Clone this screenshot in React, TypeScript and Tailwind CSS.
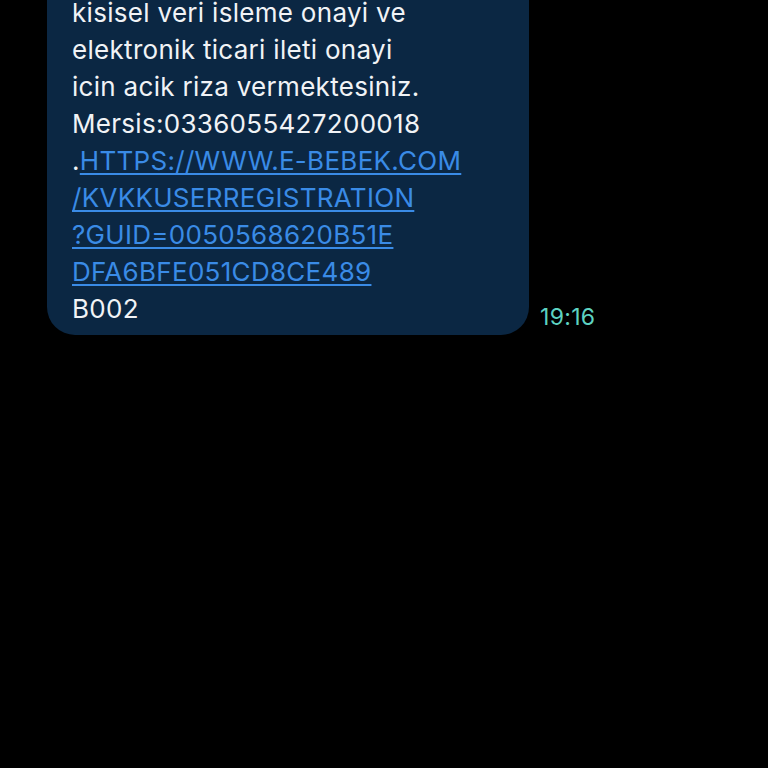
import React from "react";

export default function App() {
  const link = "text-[#3a8be6] underline decoration-[2px] underline-offset-[3px]";
  return (
    <div className="w-[768px] h-[768px] bg-black overflow-hidden" style={{ fontFamily: "Inter, Roboto, sans-serif" }}>
      <div className="flex items-end mt-[-21px] ml-[47px] gap-[11px]">
        <div className="w-[482px] bg-[#0b2743] rounded-b-[28px] pl-[25px] pr-4 pt-[15px] pb-[8px] text-[26px] leading-[37px] tracking-[0.3px] text-[#f1f3f6]">
          <div>kisisel veri isleme onayi ve</div>
          <div>elektronik ticari ileti onayi</div>
          <div>icin acik riza vermektesiniz.</div>
          <div>Mersis:0336055427200018</div>
          <div>.<span className={link}>HTTPS://WWW.E-BEBEK.COM</span></div>
          <div><span className={link}>/KVKKUSERREGISTRATION</span></div>
          <div><span className={link}>?GUID=0050568620B51E</span></div>
          <div><span className={link}>DFA6BFE051CD8CE489</span></div>
          <div>B002</div>
        </div>
        <div className="text-[23px] leading-[28px] tracking-[0.3px] text-[#5dd3c2] mb-[4px]">19:16</div>
      </div>
    </div>
  );
}
